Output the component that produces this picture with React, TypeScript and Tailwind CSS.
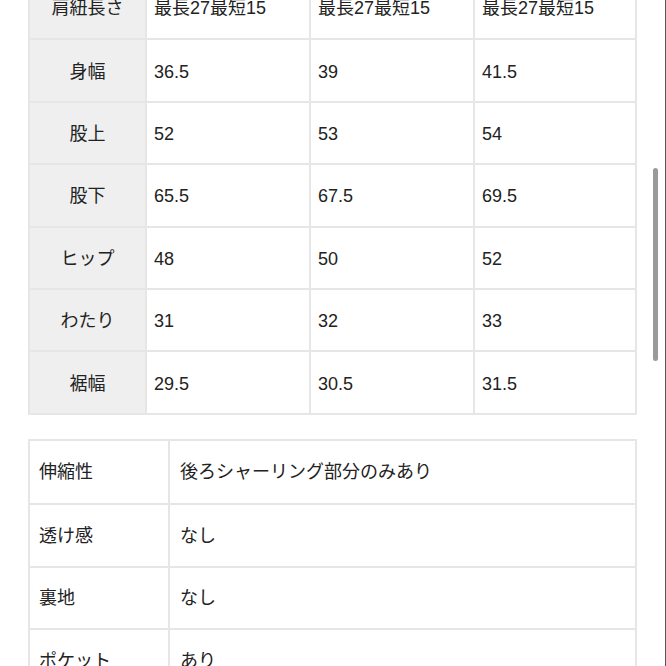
import React from 'react'

const sizeRows: [string, string, string, string][] = [
  ['肩紐長さ', '最長27最短15', '最長27最短15', '最長27最短15'],
  ['身幅', '36.5', '39', '41.5'],
  ['股上', '52', '53', '54'],
  ['股下', '65.5', '67.5', '69.5'],
  ['ヒップ', '48', '50', '52'],
  ['わたり', '31', '32', '33'],
  ['裾幅', '29.5', '30.5', '31.5'],
]

const detailRows: [string, string][] = [
  ['伸縮性', '後ろシャーリング部分のみあり'],
  ['透け感', 'なし'],
  ['裏地', 'なし'],
  ['ポケット', 'あり'],
]

export default function App() {
  return (
    <div
      className="relative w-[666px] h-[666px] overflow-hidden bg-white text-[18px] text-[#222]"
      style={{ fontFamily: '"Liberation Sans", "Noto Sans CJK JP", sans-serif' }}
    >
      <div className="ml-[28px] w-[609px] -mt-[26px]">
        {/* size table */}
        <div className="border-2 border-[#e6e6e6]">
          {sizeRows.map((row, i) => (
            <div
              key={row[0]}
              className={`grid grid-cols-[115px_164px_164px_162px] h-[62.4px] ${i > 0 ? 'border-t-2 border-[#e6e6e6]' : ''}`}
            >
              <div className="bg-[#efefef] flex items-center justify-center pt-[3px]">{row[0]}</div>
              {row.slice(1).map((v, j) => (
                <div key={j} className="flex items-center pl-[7px] pt-[3px] border-l-2 border-[#e6e6e6]">
                  {v}
                </div>
              ))}
            </div>
          ))}
        </div>

        {/* detail table */}
        <div className="mt-[24px] border-2 border-[#e6e6e6]">
          {detailRows.map((row, i) => (
            <div
              key={row[0]}
              className={`grid grid-cols-[138px_1fr] h-[62.5px] ${i > 0 ? 'border-t-2 border-[#e6e6e6]' : ''}`}
            >
              <div className="flex items-center pl-[9px] pt-[2px]">{row[0]}</div>
              <div className="flex items-center pl-[10px] pt-[2px] border-l-2 border-[#e6e6e6]">{row[1]}</div>
            </div>
          ))}
        </div>
      </div>

      {/* scroll indicator */}
      <div className="absolute left-[653px] top-[168px] w-[5px] h-[193px] rounded-full bg-[#9a9a9a]" />
      {/* frame edge */}
      <div className="absolute right-0 top-0 w-[1px] h-full bg-[#555]" />
    </div>
  )
}
